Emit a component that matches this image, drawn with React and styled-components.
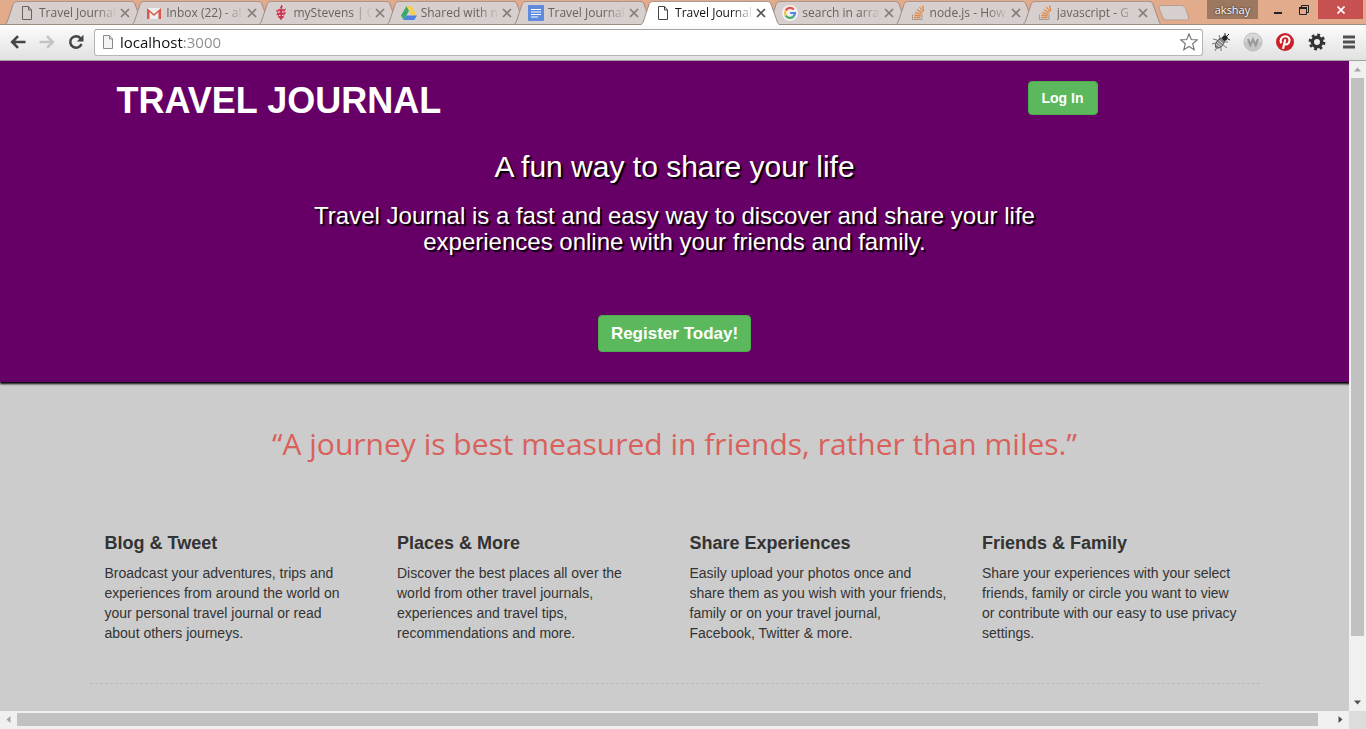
import React from "react";
import styled, { createGlobalStyle, css } from "styled-components";

const GlobalStyle = createGlobalStyle`
  *, *::before, *::after { box-sizing: border-box; }
  html, body, #root { height: 100%; }
  body {
    margin: 0;
    overflow: hidden;
    font-family: "Liberation Sans", Arial, sans-serif;
    font-size: 14px;
    line-height: 20px;
    color: #333;
  }
  h1, h2, h3, p, ul { margin: 0; padding: 0; font-weight: normal; }
  svg { display: block; flex: none; }
  button {
    margin: 0;
    padding: 0;
    border: 0;
    background: none;
    font-family: inherit;
    color: inherit;
  }
`;

const uiFont = `"Segoe UI", "Open Sans", sans-serif`;

const Window = styled.div`
  display: flex;
  flex-direction: column;
  height: 100vh;
  background: #f0f0f0;
`;

/* ---------- tab strip ---------- */

const TabStrip = styled.div`
  display: flex;
  align-items: flex-start;
  flex: none;
  height: 25px;
  padding: 0 3px 0 5px;
  background: #e2ab8b;
  box-shadow: inset 0 -1px #a08c82;
  font-family: ${uiFont};
`;

const TabList = styled.ul`
  display: flex;
  flex: 1;
  min-width: 0;
  padding-top: 1px;
  list-style: none;
`;

const Tab = styled.li`
  display: flex;
  flex: 1 1 0;
  min-width: 0;
  height: 24px;
  margin-right: -11px;
  position: relative;
  z-index: ${(p) => (p.$active ? 2 : 1)};
  color: ${(p) => (p.$active ? "#111" : "#6b625e")};
`;

const TabBody = styled.div`
  display: flex;
  align-items: center;
  flex: 1;
  min-width: 0;
  background: ${(p) => (p.$active ? "#fff" : "#d6cfcd")};
  border-top: 1px solid #a89a93;
  border-bottom: 1px solid ${(p) => (p.$active ? "#fff" : "#a08c82")};
`;

const TabTitle = styled.button`
  flex: 1;
  min-width: 0;
  margin-left: 4px;
  white-space: nowrap;
  text-align: left;
  font-size: 12px;
  line-height: 20px;
  mask-image: linear-gradient(to right, #000 72%, transparent 98%);
`;

const TabClose = styled.button`
  width: 12px;
  height: 12px;
  display: grid;
  place-items: center;
`;

const NewTab = styled.button`
  width: 34px;
  height: 18px;
  margin: 4px 0 0 7px;
`;

const Profile = styled.button`
  width: 51px;
  height: 19px;
  margin-left: 16px;
  background: #9c7860;
  color: #fff;
  font-size: 11px;
  line-height: 18px;
  text-shadow: 0 0 2px #000;
`;

const WindowButton = styled.button`
  display: grid;
  place-items: center;
  width: ${(p) => (p.$close ? 45 : 26)}px;
  height: 19px;
  ${(p) => p.$close && css`background: #c75050; margin-left: 1px;`}
  ${(p) => p.$first && css`margin-left: 7px;`}
`;

/* ---------- toolbar ---------- */

const Toolbar = styled.div`
  display: flex;
  align-items: center;
  flex: none;
  height: 36px;
  padding: 0 1px 1px 3px;
  background: linear-gradient(#fcfcfc, #e1e1e1);
  border-bottom: 1px solid #a3a3a3;
`;

const NavButton = styled.button`
  display: grid;
  place-items: center;
  width: 29px;
  height: 28px;
`;

const ExtensionButton = styled(NavButton)`
  width: 32px;
`;

const AddressBar = styled.label`
  display: flex;
  align-items: center;
  flex: 1;
  height: 27px;
  margin: 0 2px 0 4px;
  padding: 0 4px 0 5px;
  border: 1px solid #b5b5b5;
  border-top-color: #a3a3a3;
  border-radius: 3px;
  background: #fff;
`;

const AddressInput = styled.input`
  flex: 1;
  min-width: 0;
  margin-left: 4px;
  padding: 0;
  border: 0;
  outline: 0;
  background: linear-gradient(to right, #111 63px, #8c8c8c 63px);
  background-clip: text;
  color: transparent;
  font-family: ${uiFont};
  font-size: 15px;
  line-height: 22px;
`;

/* ---------- viewport and scroll bars ---------- */

const Viewport = styled.div`
  display: grid;
  flex: 1;
  min-height: 0;
  grid-template-columns: minmax(0, 1fr) 17px;
  grid-template-rows: minmax(0, 1fr) 18px;
`;

const Page = styled.main`
  overflow: hidden;
  background: #ccc;
`;

const ScrollBar = styled.div`
  display: flex;
  flex-direction: ${(p) => (p.$vertical ? "column" : "row")};
  background: #f0f0f0;
`;

const ScrollArrow = styled.button`
  display: grid;
  place-items: center;
  width: 17px;
  height: 17px;
`;

const ScrollTrack = styled.div`
  display: flex;
  flex: 1;
  flex-direction: inherit;
  padding: ${(p) => (p.$vertical ? "0 2px 58px" : "2px 14px 3px 0")};
`;

const ScrollThumb = styled.div`
  flex: 1;
  background: #c1c1c1;
`;

const Corner = styled.div`
  background: #dcdcdc;
`;

/* ---------- page ---------- */

const Hero = styled.header`
  padding: 20px 0 30px;
  background: #606;
  color: #fff;
  text-align: center;
  box-shadow: 1px 1px 2px 1px #000;
`;

const Container = styled.div`
  max-width: 1170px;
  margin: 0 auto;
`;

const Masthead = styled(Container)`
  display: flex;
  justify-content: space-between;
  align-items: flex-start;
  padding: 0 162px 0 27px;
`;

const Brand = styled.h1`
  font-size: 36px;
  line-height: 40px;
  font-weight: bold;
`;

const GreenButton = styled.button`
  padding: ${(p) => (p.$large ? "6px 12px" : "6px 13px")};
  border: 1px solid #4cae4c;
  border-radius: 4px;
  background: #5cb85c;
  color: #fff;
  font-weight: bold;
  font-size: ${(p) => (p.$large ? 17 : 14)}px;
  line-height: ${(p) => (p.$large ? 23 : 20)}px;
`;

const Tagline = styled.h2`
  margin-top: 29px;
  font-size: 30px;
  line-height: 33px;
  text-shadow: 2px 2px 1px #000;
`;

const Lead = styled.p`
  max-width: 780px;
  margin: 20px auto 60px;
  font-size: 24px;
  line-height: 26px;
  text-shadow: 2px 2px 1px #000;
`;

const Quote = styled.p`
  margin-top: 41px;
  color: #d9615c;
  text-align: center;
  font-family: "Comic Sans MS", "Open Sans", sans-serif;
  font-size: 30px;
  font-weight: 500;
  line-height: 42px;
`;

const Features = styled(Container)`
  display: grid;
  grid-template-columns: repeat(4, 1fr);
  margin-top: 68px;
  padding-bottom: 40px;
  border-bottom: 1px dashed #bbb;
`;

const Feature = styled.section`
  padding: 0 15px;
`;

const FeatureTitle = styled.h3`
  margin-bottom: 10px;
  font-size: 18px;
  line-height: 20px;
  font-weight: bold;
`;

const FeatureText = styled.p`
  white-space: pre-line;
`;

/* ---------- drawings ---------- */

const PageIcon = ({ color = "#6b625e", fill = "none" }) => (
  <svg width="16" height="16" viewBox="0 0 16 16" fill={fill} stroke={color}>
    <path d="M3.500 1.500h6l3 3.500v9.500h-9zM9.500 1.500V5h3" />
  </svg>
);

const MailIcon = () => (
  <svg width="16" height="16" viewBox="0 0 16 16">
    <path d="M1 3h14v11H1z" fill="#eee" />
    <path d="M1 14V3l7 6 7-6v11h-2.500V7L8 11 3.500 7v7z" fill="#d8594c" />
  </svg>
);

const CrestIcon = () => (
  <svg width="16" height="16" viewBox="0 0 16 16" fill="none" stroke="#c8324f">
    <path d="M8.500 0v4M7 2.500l3-1" />
    <path d="M4.500 4.500L8 3.500l4 1v4l-1.500 3.500L8 15l-2.500-3-1.500-3z" fill="#d44863" stroke="none" />
    <path d="M3 5.500l2 1M3.500 9.500l9.500-1.500M5 12h6M8 4v11M11 5l2-1" />
    <path d="M5 7h2M9 7h2.500M6 10.500h1.500M9 10.500h1.500" stroke="#eddce0" />
  </svg>
);

const DriveIcon = () => (
  <svg width="16" height="16" viewBox="0 0 16 16">
    <path d="M5.500 1L0 10.500 2.700 15 8.200 5.500z" fill="#3caa6b" />
    <path d="M5.500 1h5L16 10.500h-5.300z" fill="#f7cf4f" />
    <path d="M5.300 10.500H16L13.300 15H2.700z" fill="#4f82e0" />
  </svg>
);

const DocsIcon = () => (
  <svg width="16" height="16" viewBox="0 0 16 16">
    <rect width="16" height="16" rx="1" fill="#5f8ade" />
    <path d="M3 4.500h10M3 7h10M3 9.500h10M3 12h7" stroke="#fff" />
  </svg>
);

const GoogleIcon = () => (
  <svg width="16" height="16" viewBox="0 0 16 16" fill="none" strokeWidth="2.200">
    <circle cx="8" cy="8" r="8" fill="#f3efee" />
    <path d="M11.800 4.400A5 5 0 0 0 3.700 5.500" stroke="#e2554a" />
    <path d="M3.700 5.500a5 5 0 0 0 0 5" stroke="#f2c043" />
    <path d="M3.700 10.500a5 5 0 0 0 7.600 1.200" stroke="#4aaa64" />
    <path d="M11.300 11.700A5 5 0 0 0 13 8H8.200" stroke="#5185e0" />
  </svg>
);

const StackIcon = () => (
  <svg width="16" height="16" viewBox="0 0 16 16" fill="none">
    <path d="M2.500 9.500v5h9.500v-5" stroke="#a49b97" />
    <path d="M4 12.500h6.500M4.300 10l6.400.8M5.200 7.300l6 2M7 4.500l5 3.700M9.500 2l3.500 5M12.500.5l1.300 5.500" stroke="#e08a48" strokeWidth="1.300" />
  </svg>
);

const CloseGlyph = ({ color = "#857b77" }) => (
  <svg width="10" height="10" viewBox="0 0 10 10" stroke={color} strokeWidth="1.700">
    <path d="M1 1l8 8M9 1l-8 8" />
  </svg>
);

const TabEdge = ({ active, right }) => {
  const outline = right
    ? "M0 .5C2 .5 3 1 4 3l6 17q1 3 2 3.500"
    : "M0 23.500q1.500-.5 2.500-3.500L8 3.500C9 1 10 .5 14 .5";
  const w = right ? 12 : 14;
  return (
    <svg width={w} height="24" viewBox={`0 0 ${w} 24`}>
      <path d={`${outline}V24H0z`} fill={active ? "#fff" : "#d6cfcd"} />
      <path d={outline} fill="none" stroke="#a08c82" />
      {!active && <path d={`M0 23.500H${w}`} stroke="#a08c82" />}
    </svg>
  );
};

const BugIcon = () => (
  <svg width="20" height="20" viewBox="0 0 20 20" fill="none" stroke="#555">
    <ellipse cx="9" cy="11" rx="3.200" ry="6" transform="rotate(40 9 11)" fill="#888" stroke="#444" />
    <path d="M6 10l5 4M7.500 8l5 4M5 12l4 3" stroke="#ddd" />
    <path d="M6 8L2 7M5 11l-4 1M6 15l-2 4M10 15v4M12 13l4 3M13 10h4M9 6L8 3" stroke="#777" />
    <circle cx="14" cy="6" r="2.300" fill="#222" stroke="#222" />
    <path d="M14 3V1M16 4l2-2M17 7l2 1" stroke="#222" />
  </svg>
);

const WotIcon = () => (
  <svg width="20" height="20" viewBox="0 0 20 20">
    <circle cx="10" cy="10" r="9" fill="#c6c6c6" stroke="#bcbcbc" />
    <path d="M1.500 10a8.500 8.500 0 0 1 17 0z" fill="#d8d8d8" />
    <path d="M5 7l2.300 6L10 7.500l2.700 5.500L15 7" fill="none" stroke="#9a9a9a" strokeWidth="2.200" />
  </svg>
);

const PinIcon = () => (
  <svg width="20" height="20" viewBox="0 0 20 20" fill="none">
    <circle cx="10" cy="10" r="9" fill="#cb2027" />
    <path d="M6.300 11.300C4.500 8 6.500 4.300 10.200 4.300c3.400 0 4.800 2.500 4.200 5-.8 3.200-3.900 4-5.100 2.200M10.300 7.200L8 17" stroke="#fff" strokeWidth="2.100" />
  </svg>
);

const GearIcon = () => (
  <svg width="18" height="18" viewBox="0 0 18 18" fill="none" stroke="#333">
    <circle cx="9" cy="9" r="4.700" strokeWidth="3.400" />
    <circle cx="9" cy="9" r="7.200" strokeWidth="2.400" strokeDasharray="2.830 2.830" />
  </svg>
);

const Arrow = ({ turn = 0, color = "#505050" }) => (
  <svg width="7" height="7" viewBox="0 0 7 7" fill={color}>
    <path d="M0 5.500L3.500 1.500 7 5.500z" transform={`rotate(${turn} 3.500 3.500)`} />
  </svg>
);

const tabs = [
  { title: "Travel Journal", icon: <PageIcon /> },
  { title: "Inbox (22) - al", icon: <MailIcon /> },
  { title: "myStevens | C", icon: <CrestIcon /> },
  { title: "Shared with n", icon: <DriveIcon /> },
  { title: "Travel Journal", icon: <DocsIcon /> },
  { title: "Travel Journal", icon: <PageIcon color="#444" />, active: true },
  { title: "search in array", icon: <GoogleIcon /> },
  { title: "node.js - How", icon: <StackIcon /> },
  { title: "javascript - G", icon: <StackIcon /> },
];

const features = [
  {
    title: "Blog & Tweet",
    text: `Broadcast your adventures, trips and
      experiences from around the world on
      your personal travel journal or read
      about others journeys.`,
  },
  {
    title: "Places & More",
    text: `Discover the best places all over the
      world from other travel journals,
      experiences and travel tips,
      recommendations and more.`,
  },
  {
    title: "Share Experiences",
    text: `Easily upload your photos once and
      share them as you wish with your friends,
      family or on your travel journal,
      Facebook, Twitter & more.`,
  },
  {
    title: "Friends & Family",
    text: `Share your experiences with your select
      friends, family or circle you want to view
      or contribute with our easy to use privacy
      settings.`,
  },
];

export default function App() {
  return (
    <Window>
      <GlobalStyle />
      <TabStrip>
        <TabList>
          {tabs.map((tab, i) => (
            <Tab key={i} $active={tab.active}>
              <TabEdge active={tab.active} />
              <TabBody $active={tab.active}>
                {tab.icon}
                <TabTitle>{tab.title}</TabTitle>
                <TabClose aria-label="Close tab">
                  <CloseGlyph color={tab.active ? "#555" : undefined} />
                </TabClose>
              </TabBody>
              <TabEdge active={tab.active} right />
            </Tab>
          ))}
        </TabList>
        <NewTab aria-label="New tab">
          <svg width="34" height="18" viewBox="0 0 34 18">
            <path d="M3.500 1.500h21q3 0 4 2.500l3 9q1 3-2 3h-20q-3 0-4-3L2 4Q1.500 1.500 3.500 1.500z" fill="#d6cfcd" stroke="#b79d8f" />
          </svg>
        </NewTab>
        <Profile>akshay</Profile>
        <WindowButton $first aria-label="Minimize">
          <svg width="10" height="10"><path d="M1 8h8" stroke="#222" strokeWidth="2" /></svg>
        </WindowButton>
        <WindowButton aria-label="Restore">
          <svg width="10" height="10" fill="none" stroke="#222">
            <path d="M2.500 2V.5h7v7H8M.5 3v6.500h7V3" />
            <path d="M0 3h8" strokeWidth="2" />
          </svg>
        </WindowButton>
        <WindowButton $close aria-label="Close">
          <svg width="8" height="8" stroke="#fff" strokeWidth="1.700"><path d="M.5.5l7 7M7.500.5l-7 7" /></svg>
        </WindowButton>
      </TabStrip>

      <Toolbar>
        <NavButton aria-label="Back">
          <svg width="16" height="14" viewBox="0 0 16 14" fill="none" stroke="#444" strokeWidth="2.600">
            <path d="M15.500 7H2.500M8 1.200L2.200 7 8 12.800" />
          </svg>
        </NavButton>
        <NavButton aria-label="Forward">
          <svg width="16" height="14" viewBox="0 0 16 14" fill="none" stroke="#c4c4c4" strokeWidth="2.600">
            <path d="M.5 7h13M8 1.200L13.800 7 8 12.800" />
          </svg>
        </NavButton>
        <NavButton aria-label="Reload">
          <svg width="16" height="16" viewBox="0 0 16 16" fill="none" stroke="#444" strokeWidth="2.500">
            <path d="M12.500 4.200A5.800 5.800 0 1 0 13.500 10" />
            <path d="M15.500.8v6.700H8.800z" fill="#444" stroke="none" />
          </svg>
        </NavButton>
        <AddressBar>
          <PageIcon color="#8a8a8a" fill="#f4f4f4" />
          <AddressInput aria-label="Address" defaultValue="localhost:3000" />
          <svg width="18" height="18" viewBox="0 0 18 18" fill="#fff" stroke="#777" strokeWidth="1.200">
            <path d="M9 1l2.300 5.500 6 .4-4.600 3.900 1.500 5.900L9 13.500l-5.200 3.200 1.500-5.900L.700 6.900l6-.4z" />
          </svg>
        </AddressBar>
        <ExtensionButton aria-label="Debugger"><BugIcon /></ExtensionButton>
        <ExtensionButton aria-label="Site rating"><WotIcon /></ExtensionButton>
        <ExtensionButton aria-label="Pin"><PinIcon /></ExtensionButton>
        <ExtensionButton aria-label="Settings"><GearIcon /></ExtensionButton>
        <ExtensionButton aria-label="Menu">
          <svg width="14" height="14" stroke="#505050" strokeWidth="3"><path d="M1 2h12M1 7h12M1 12h12" /></svg>
        </ExtensionButton>
      </Toolbar>

      <Viewport>
        <Page>
          <Hero>
            <Masthead>
              <Brand>TRAVEL JOURNAL</Brand>
              <GreenButton>Log In</GreenButton>
            </Masthead>
            <Tagline>A fun way to share your life</Tagline>
            <Lead>
              Travel Journal is a fast and easy way to discover and share your life
              experiences online with your friends and family.
            </Lead>
            <GreenButton $large>Register Today!</GreenButton>
          </Hero>
          <Quote>“A journey is best measured in friends, rather than miles.”</Quote>
          <Features>
            {features.map((f) => (
              <Feature key={f.title}>
                <FeatureTitle>{f.title}</FeatureTitle>
                <FeatureText>{f.text}</FeatureText>
              </Feature>
            ))}
          </Features>
        </Page>
        <ScrollBar $vertical>
          <ScrollArrow aria-label="Scroll up"><Arrow color="#a3a3a3" /></ScrollArrow>
          <ScrollTrack $vertical><ScrollThumb /></ScrollTrack>
          <ScrollArrow aria-label="Scroll down"><Arrow turn={180} /></ScrollArrow>
        </ScrollBar>
        <ScrollBar>
          <ScrollArrow aria-label="Scroll left"><Arrow turn={270} color="#a3a3a3" /></ScrollArrow>
          <ScrollTrack><ScrollThumb /></ScrollTrack>
          <ScrollArrow aria-label="Scroll right"><Arrow turn={90} /></ScrollArrow>
        </ScrollBar>
        <Corner />
      </Viewport>
    </Window>
  );
}
